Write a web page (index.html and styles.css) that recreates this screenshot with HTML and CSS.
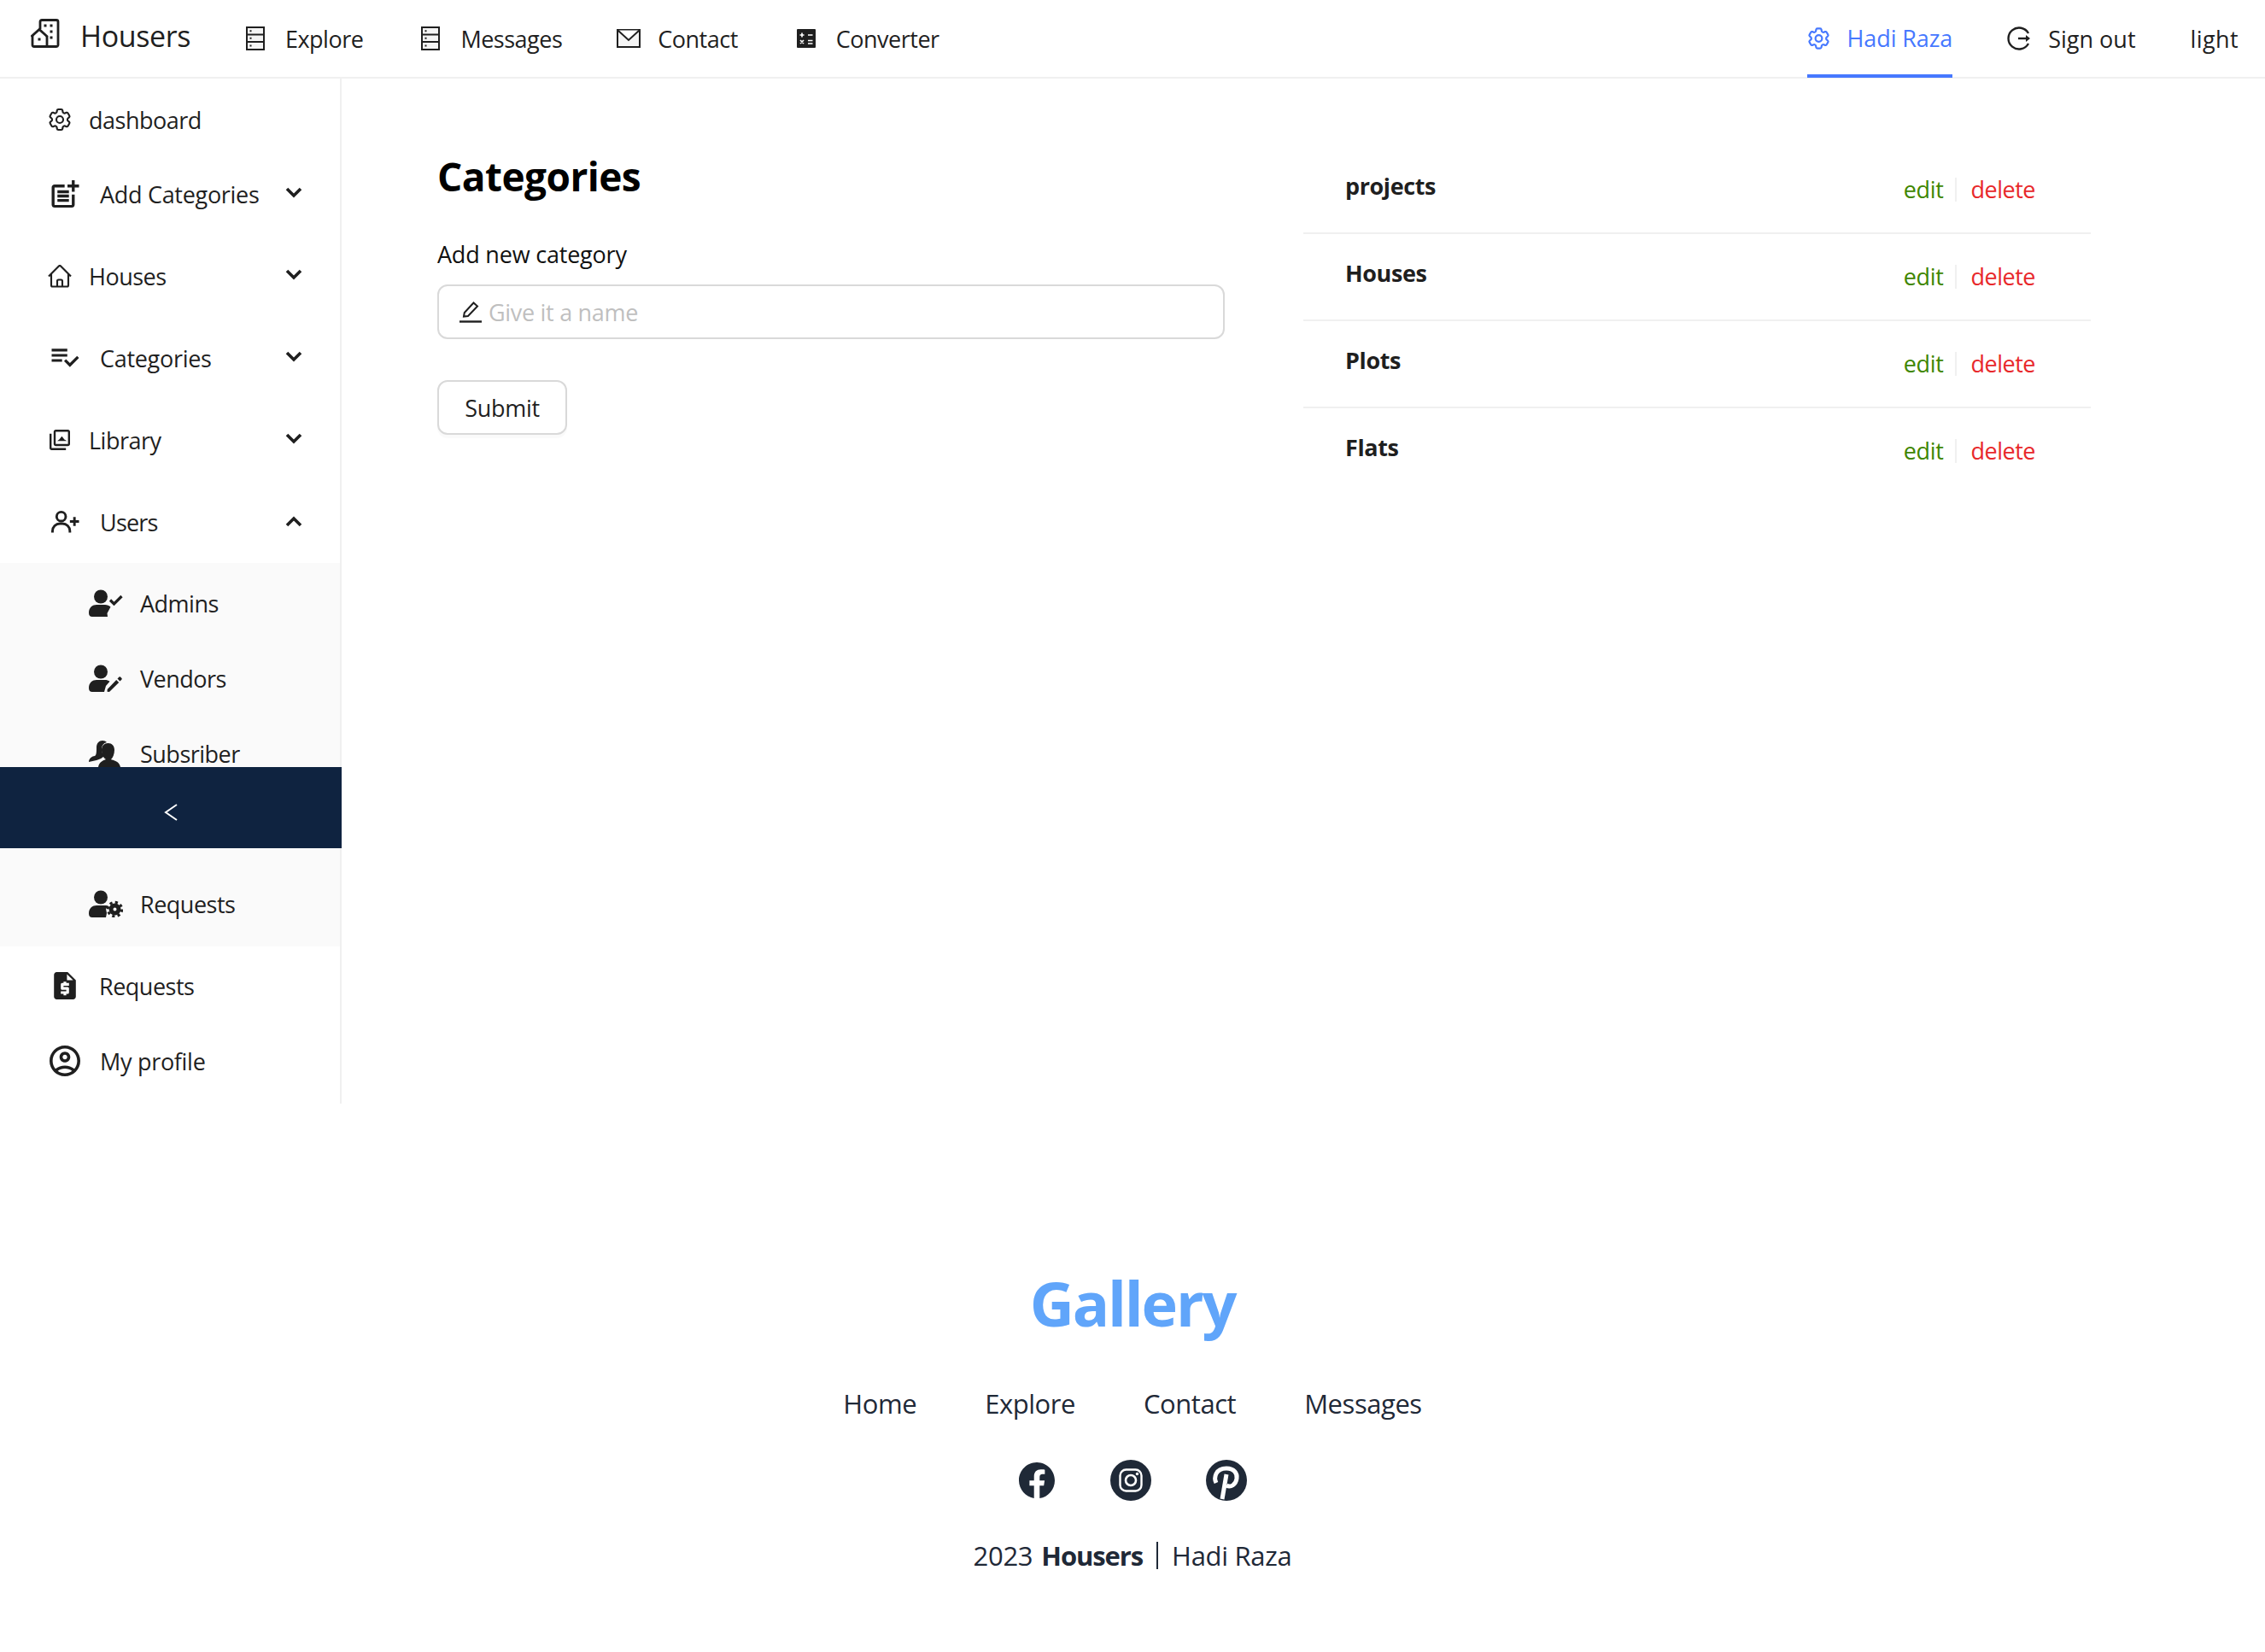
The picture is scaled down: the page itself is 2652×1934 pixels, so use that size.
FILE: index.html
```html
<!DOCTYPE html>
<html lang="en">
<head>
	<meta charset="UTF-8">
	<title>Houser admin - Categories</title>
	<link rel="stylesheet" href="styles.css">
</head>
<body>

	<!-- Top bar -->
	<header class="topbar">
		<a class="brand">
			<svg class="brand-icon" viewBox="0 0 34 34" fill="none" stroke="#1f1f1f" stroke-width="2.800"><path d="M11 12V3.500a2 2 0 0 1 2-2h17a2 2 0 0 1 2 2v27.500a2 2 0 0 1-2 1.500H4a2 2 0 0 1-2-2V20"/><path d="M0.500 21L10 12.500 19.500 21"/><path d="M19 20v13"/><path d="M15.500 8h3M22.500 8h3M22.500 15h3M22.500 22h3M8.500 24h3"/></svg>
			<span>Housers</span>
		</a>
		<nav class="topnav">
			<a class="topnav-item item-explore">
				<svg class="ic-server" viewBox="0 0 22 28" fill="none" stroke="#1f1f1f" stroke-width="2"><rect x="1" y="1" width="20" height="26" fill="#f4f4f4"/><path d="M1 9.500h20M1 18h20"/><path d="M4.500 5.200h2M4.500 13.800h2M4.500 22.500h2"/></svg>
				<span>Explore</span>
			</a>
			<a class="topnav-item">
				<svg class="ic-server" viewBox="0 0 22 28" fill="none" stroke="#1f1f1f" stroke-width="2"><rect x="1" y="1" width="20" height="26" fill="#f4f4f4"/><path d="M1 9.500h20M1 18h20"/><path d="M4.500 5.200h2M4.500 13.800h2M4.500 22.500h2"/></svg>
				<span>Messages</span>
			</a>
			<a class="topnav-item item-contact">
				<svg class="ic-mail" viewBox="0 0 28 22" fill="none" stroke="#1f1f1f" stroke-width="2"><rect x="1" y="1" width="26" height="20" fill="#f4f4f4"/><path d="M1.500 1.500L14 13 26.500 1.500" fill="#fff"/></svg>
				<span>Contact</span>
			</a>
			<a class="topnav-item">
				<svg class="ic-calc" viewBox="0 0 22 22"><rect width="22" height="22" rx="1" fill="#1f1f1f"/><path d="M3.500 7h5M6 4.500v5M13 7h5.500M4 13l4 4M8 13l-4 4M13 13.500h5.500M13 17h5.500" stroke="#fff" stroke-width="1.700" fill="none"/></svg>
				<span>Converter</span>
			</a>
		</nav>
		<div class="topbar-right">
			<a class="topnav-item is-active">
				<svg class="ic-gear" viewBox="1.500 1.500 21 21" fill="none" stroke="currentColor" stroke-width="1.700"><path d="M9.594 3.940c.090-.542.560-.940 1.110-.940h2.593c.550 0 1.020.398 1.110.940l.213 1.281c.063.374.313.686.645.870.074.040.147.083.220.127.324.196.720.257 1.075.124l1.217-.456a1.125 1.125 0 0 1 1.370.490l1.296 2.247a1.125 1.125 0 0 1-.260 1.431l-1.003.827c-.293.240-.438.613-.431.992a6.759 6.759 0 0 1 0 .255c-.007.378.138.750.430.990l1.005.828c.424.350.534.954.260 1.430l-1.298 2.247a1.125 1.125 0 0 1-1.369.491l-1.217-.456c-.355-.133-.750-.072-1.076.124a6.570 6.570 0 0 1-.220.128c-.331.183-.581.495-.644.869l-.213 1.280c-.090.543-.560.941-1.110.941h-2.594c-.550 0-1.020-.398-1.110-.940l-.213-1.281c-.062-.374-.312-.686-.644-.870a6.520 6.520 0 0 1-.220-.127c-.325-.196-.720-.257-1.076-.124l-1.217.456a1.125 1.125 0 0 1-1.369-.490l-1.297-2.247a1.125 1.125 0 0 1 .260-1.431l1.004-.827c.292-.240.437-.613.430-.992a6.932 6.932 0 0 1 0-.255c.007-.378-.138-.750-.430-.990l-1.004-.828a1.125 1.125 0 0 1-.260-1.430l1.297-2.247a1.125 1.125 0 0 1 1.370-.491l1.216.456c.356.133.751.072 1.076-.124.072-.044.146-.087.220-.128.332-.183.582-.495.644-.869l.214-1.281z"/><circle cx="12" cy="12" r="3"/></svg>
				<span>Hadi Raza</span>
			</a>
			<a class="topnav-item item-signout">
				<svg class="ic-signout" viewBox="0 0 28 28" fill="none" stroke="#1f1f1f" stroke-width="2.400"><path d="M25 8a12.500 12.500 0 1 0 0 12"/><path d="M13 14h12" /><path d="M22 10l5 4-5 4z" fill="#1f1f1f" stroke="none"/></svg>
				<span>Sign out</span>
			</a>
			<a class="theme-toggle">light</a>
		</div>
	</header>

	<div class="layout">
		<!-- Sidebar menu -->
		<aside class="sidebar">
			<ul class="menu">
				<li class="menu-row row-first pad-a">
					<svg class="ic-side-gear" viewBox="1.500 1.500 21 21" fill="none" stroke="#1f1f1f" stroke-width="1.600"><path d="M9.594 3.940c.090-.542.560-.940 1.110-.940h2.593c.550 0 1.020.398 1.110.940l.213 1.281c.063.374.313.686.645.870.074.040.147.083.220.127.324.196.720.257 1.075.124l1.217-.456a1.125 1.125 0 0 1 1.370.490l1.296 2.247a1.125 1.125 0 0 1-.260 1.431l-1.003.827c-.293.240-.438.613-.431.992a6.759 6.759 0 0 1 0 .255c-.007.378.138.750.430.990l1.005.828c.424.350.534.954.260 1.430l-1.298 2.247a1.125 1.125 0 0 1-1.369.491l-1.217-.456c-.355-.133-.750-.072-1.076.124a6.570 6.570 0 0 1-.220.128c-.331.183-.581.495-.644.869l-.213 1.280c-.090.543-.560.941-1.110.941h-2.594c-.550 0-1.020-.398-1.110-.940l-.213-1.281c-.062-.374-.312-.686-.644-.870a6.520 6.520 0 0 1-.220-.127c-.325-.196-.720-.257-1.076-.124l-1.217.456a1.125 1.125 0 0 1-1.369-.490l-1.297-2.247a1.125 1.125 0 0 1 .260-1.431l1.004-.827c.292-.240.437-.613.430-.992a6.932 6.932 0 0 1 0-.255c.007-.378-.138-.750-.430-.990l-1.004-.828a1.125 1.125 0 0 1-.260-1.430l1.297-2.247a1.125 1.125 0 0 1 1.370-.491l1.216.456c.356.133.751.072 1.076-.124.072-.044.146-.087.220-.128.332-.183.582-.495.644-.869l.214-1.281z"/><circle cx="12" cy="12" r="3"/></svg>
					<span>dashboard</span>
				</li>
				<li class="menu-row has-caret pad-b">
					<svg class="ic-34" viewBox="3 2 19 19" fill="#1f1f1f"><path d="M17 19.220H5V7h7V5H5c-1.100 0-2 .9-2 2v12c0 1.100.9 2 2 2h12c1.100 0 2-.9 2-2v-7h-2v7.220z"/><path d="M19 2h-2v3h-3v2h3v3h2V7h3V5h-3V2z"/><path d="M7 9h8v2H7zM7 12h8v2H7zM7 15h8v2H7z"/></svg>
					<span>Add Categories</span>
					<svg class="caret" viewBox="0 0 20 14" fill="none" stroke="#1f1f1f" stroke-width="3.600"><path d="M2 3l8 8 8-8"/></svg>
				</li>
				<li class="menu-row has-caret pad-a">
					<svg class="ic-home" viewBox="1.500 2 21 20" fill="none" stroke="#1f1f1f" stroke-width="1.600"><path d="M2.250 12l8.954-8.955c.440-.439 1.152-.439 1.591 0L21.750 12M4.500 9.750v10.125c0 .621.504 1.125 1.125 1.125H9.750v-4.875c0-.621.504-1.125 1.125-1.125h2.250c.621 0 1.125.504 1.125 1.125V21h4.125c.621 0 1.125-.504 1.125-1.125V9.750M8.250 21h8.250"/></svg>
					<span>Houses</span>
					<svg class="caret" viewBox="0 0 20 14" fill="none" stroke="#1f1f1f" stroke-width="3.600"><path d="M2 3l8 8 8-8"/></svg>
				</li>
				<li class="menu-row has-caret pad-b">
					<svg class="ic-34" viewBox="2 2.500 21 21" fill="#1f1f1f"><path d="M14 10H2v2h12v-2zm0-4H2v2h12V6zM2 16h8v-2H2v2zm19.500-4.500L23 13l-6.990 7-4.510-4.500L13 14l3.010 3 5.490-5.500z"/></svg>
					<span>Categories</span>
					<svg class="caret" viewBox="0 0 20 14" fill="none" stroke="#1f1f1f" stroke-width="3.600"><path d="M2 3l8 8 8-8"/></svg>
				</li>
				<li class="menu-row has-caret pad-c">
					<svg class="ic-lib" viewBox="2 2 20 20" fill="#1f1f1f"><path d="M20 4v12H8V4h12m0-2H8c-1.100 0-2 .9-2 2v12c0 1.100.9 2 2 2h12c1.100 0 2-.9 2-2V4c0-1.100-.9-2-2-2zm-8.500 9.670l2.500-3.170 2.500 3 2.500 1.500H9.500zM2 6v14c0 1.100.9 2 2 2h14v-2H4V6H2z"/></svg>
					<span>Library</span>
					<svg class="caret" viewBox="0 0 20 14" fill="none" stroke="#1f1f1f" stroke-width="3.600"><path d="M2 3l8 8 8-8"/></svg>
				</li>
				<li class="menu-row has-caret pad-b item-users">
					<svg class="ic-34" viewBox="0 0 34 28" fill="none" stroke="#1f1f1f" stroke-width="3"><circle cx="12" cy="7.500" r="5.500"/><path d="M1.500 27v-2a9 9 0 0 1 9-9h3a9 9 0 0 1 9 9v2"/><path d="M22.500 13.500h11M28 8v11"/></svg>
					<span>Users</span>
					<svg class="caret caret-up" viewBox="0 0 20 14" fill="none" stroke="#1f1f1f" stroke-width="3.600"><path d="M2 11l8-8 8 8"/></svg>
				</li>
			</ul>

			<ul class="submenu">
				<li class="sub-row">
					<svg class="ic-sub" viewBox="0 0 40 32" fill="#1f1f1f"><circle cx="14" cy="8.500" r="8"/><path d="M0 27.500C0 21 4.500 18 9 18h10c2.500 0 5 1 6.500 2.500l-4 7.500 .5 4H4c-2.500 0-4-1.500-4-4.500z"/><path d="M25 12.500l4.500 4.500 9-9" fill="none" stroke="#1f1f1f" stroke-width="3.200"/></svg>
					<span>Admins</span>
				</li>
				<li class="sub-row">
					<svg class="ic-sub" viewBox="0 0 40 32" fill="#1f1f1f"><circle cx="14" cy="8.500" r="8"/><path d="M0 27.500C0 21 4.500 18 9 18h10c2 0 4 .6 5.500 1.700L20 25l-2 7H4c-2.500 0-4-1.500-4-4.500z"/><path d="M24 32l-2.500-.2 .2-2.800 10.500-11 3 3zM33.500 16.500l2-2c.5-.4 1-.4 1.500 0l1.500 1.500c.4.5.4 1 0 1.500l-2 2z"/></svg>
					<span>Vendors</span>
				</li>
				<li class="sub-row">
					<svg class="ic-sub" viewBox="0 0 40 32" fill="#1f1f1f"><path d="M9 9c0-5 3-8 7-8 2 0 4 .8 5 2-4 1-6 4-6 8 0 3 1 6 3 8-2 2-5 4-9 5l-9 2c0-4 4-7 7-7 2-1 2-5 2-10z"/><path d="M15 12c0-5 3-8 7.500-8S30 7 30 12s-2 9-4 11c2 1 10 2 11 9H11c1-6 6-8 9-9-3-2-5-6-5-11z"/></svg>
					<span>Subsriber</span>
				</li>
				<li class="sub-row sub-last">
					<svg class="ic-sub" viewBox="0 0 40 32" fill="#1f1f1f"><circle cx="14" cy="8.500" r="8"/><path d="M0 27.500C0 21 4.500 18 9 18h10c1.500 0 3 .3 4 1l-3 3 1 5-1 5H4c-2.500 0-4-1.500-4-4.500z"/><circle cx="30.500" cy="22.500" r="8.200" fill="none" stroke="#1f1f1f" stroke-width="3" stroke-dasharray="3.200 3.240"/><circle cx="30.500" cy="22.500" r="4.500" fill="none" stroke="#1f1f1f" stroke-width="5"/></svg>
					<span>Requests</span>
				</li>
			</ul>

			<ul class="menu menu-bottom">
				<li class="menu-row pad-d">
					<svg class="ic-doc" viewBox="4 2 16 20" fill="#1f1f1f"><path d="M14 2H6c-1.100 0-1.990.9-1.990 2L4 20c0 1.100.890 2 1.990 2H18c1.100 0 2-.9 2-2V8l-6-6zm1 10h-4v1h3c.550 0 1 .450 1 1v3c0 .550-.450 1-1 1h-1v1h-2v-1H9v-2h4v-1h-3c-.550 0-1-.450-1-1v-3c0-.550.450-1 1-1h1V9h2v1h2v2zm-1.500-4V3.500L18 8h-4.500z"/></svg>
					<span>Requests</span>
				</li>
				<li class="menu-row pad-e">
					<svg class="ic-profile" viewBox="2 2 20 20" fill="#1f1f1f"><path d="M12 2C6.480 2 2 6.480 2 12s4.480 10 10 10 10-4.480 10-10S17.520 2 12 2zM7.350 18.500C8.660 17.560 10.260 17 12 17s3.340.560 4.650 1.500c-1.310.940-2.910 1.500-4.650 1.500s-3.340-.560-4.650-1.500zm10.790-1.380C16.450 15.800 14.320 15 12 15s-4.450.800-6.140 2.120C4.700 15.730 4 13.950 4 12c0-4.420 3.580-8 8-8s8 3.580 8 8c0 1.950-.7 3.730-1.860 5.120z"/><path d="M12 6c-1.930 0-3.500 1.570-3.500 3.500S10.070 13 12 13s3.500-1.570 3.500-3.500S13.930 6 12 6zm0 5c-.830 0-1.500-.670-1.500-1.500S11.170 8 12 8s1.500.670 1.500 1.500S12.830 11 12 11z"/></svg>
					<span>My profile</span>
				</li>
			</ul>

			<!-- collapse trigger sits over the menu -->
			<div class="trigger">
				<svg class="ic-trigger" viewBox="0 0 16 26" fill="none" stroke="#fff" stroke-width="2"><path d="M15 4L2 13l13 9"/></svg>
			</div>
		</aside>

		<!-- Page content -->
		<main class="content">
			<section class="form-col">
				<h1 class="page-title">Categories</h1>
				<label class="field-label">Add new category</label>
				<div class="input-box">
					<svg class="ic-pen" viewBox="0 0 26 26" fill="none" stroke="#1f1f1f" stroke-width="2"><path d="M5 18.500l.8-4.500L16.500 2.500 21 6.500 10 18z"/><path d="M0 24.500h26" stroke-width="2.400"/></svg>
					<input class="text-input" type="text" placeholder="Give it a name">
				</div>
				<button class="submit-btn">Submit</button>
			</section>

			<section class="list-col">
				<div class="cat-row">
					<span class="cat-name">projects</span>
					<div class="cat-actions"><a class="act-edit">edit</a><a class="act-delete">delete</a></div>
				</div>
				<div class="cat-row">
					<span class="cat-name">Houses</span>
					<div class="cat-actions"><a class="act-edit">edit</a><a class="act-delete">delete</a></div>
				</div>
				<div class="cat-row">
					<span class="cat-name">Plots</span>
					<div class="cat-actions"><a class="act-edit">edit</a><a class="act-delete">delete</a></div>
				</div>
				<div class="cat-row">
					<span class="cat-name">Flats</span>
					<div class="cat-actions"><a class="act-edit">edit</a><a class="act-delete">delete</a></div>
				</div>
			</section>
		</main>
	</div>

	<footer class="footer">
		<div class="footer-title">Gallery</div>
		<nav class="footer-links">
			<a>Home</a>
			<a>Explore</a>
			<a>Contact</a>
			<a>Messages</a>
		</nav>
		<div class="socials">
			<svg class="ic-fb" viewBox="0 0 16 16" fill="#1f2937"><path d="M16 8.049c0-4.446-3.582-8.050-8-8.050C3.580 0-.002 3.603-.002 8.050c0 4.017 2.926 7.347 6.750 7.951v-5.625h-2.030V8.050H6.750V6.275c0-2.017 1.195-3.131 3.022-3.131.876 0 1.791.157 1.791.157v1.980h-1.009c-.993 0-1.303.621-1.303 1.258v1.510h2.218l-.354 2.326H9.250V16c3.824-.604 6.750-3.934 6.750-7.951z"/></svg>
			<svg class="ic-ig" viewBox="0 0 48 48" fill="none"><circle cx="24" cy="24" r="24" fill="#1f2937"/><rect x="11.500" y="11.500" width="25" height="25" rx="7" stroke="#fff" stroke-width="2.400"/><circle cx="24" cy="24" r="6" stroke="#fff" stroke-width="2.600"/><circle cx="31.500" cy="16.500" r="1.700" fill="#fff"/></svg>
			<svg class="ic-pin" viewBox="0 0 48 48" fill="none"><circle cx="24" cy="24" r="24" fill="#1f2937"/><path d="M12 27c-3-6-1-17 12-17 9 0 13 6 12 12-1 7-7 11-12 8" stroke="#fff" stroke-width="5"/><path d="M24 17l-5 29" stroke="#fff" stroke-width="5"/></svg>
		</div>
		<p class="copyright">2023 <b>Housers</b> <span class="sep"></span> Hadi Raza</p>
	</footer>

</body>
</html>
```

FILE: styles.css
```css
:root{
	--ink: #1f1f1f;
	--line: #f0f0f0;
	--blue: #4678ff;
	--footer-ink: #1f2937;
}
*{
	box-sizing: border-box;
}
body {
	margin: 0;
	min-height: 1934px;
	background-color: white;
	color: var(--ink);
	font-family: "Open Sans", "Noto Sans", sans-serif;
	font-size: 27px;
	letter-spacing: -0.3px;
}
ul {
	list-style: none;
	margin: 0;
	padding: 0;
}
svg {
	display: block;
	flex: none;
}

/* top bar */
.topbar {
	display: flex;
	align-items: center;
	height: 92px;
	padding: 0 31px 0 36px;
	border-bottom: 2px solid var(--line);
}
.brand {
	display: flex;
	align-items: center;
	gap: 24px;
	font-size: 34px;
	letter-spacing: -0.4px;
	margin-top: -6px;
}
.brand-icon {
	width: 34px;
	height: 34px;
	margin-top: -6px;
}
.topnav {
	display: flex;
	margin-left: 65px;
	gap: 64px;
	letter-spacing: -0.5px;
}
.topnav-item {
	display: flex;
	align-items: center;
	gap: 24px;
}
.item-explore {
	margin-right: 4px;
}
.item-contact {
	gap: 20px;
	margin-right: 5px;
}
.topbar-right {
	display: flex;
	align-items: center;
	margin-left: auto;
	height: 90px;
}
.topbar-right .topnav-item {
	margin-right: 64px;
	gap: 20px;
}
.topbar-right .topnav-item.is-active {
	height: 92px;
	color: var(--blue);
	border-bottom: 4px solid var(--blue);
	padding-top: 3px;
	letter-spacing: -0.1px;
}
.topbar-right .item-signout {
	letter-spacing: 0;
}
.theme-toggle {
	letter-spacing: 0.4px;
}
.ic-server { width: 22px; height: 28px; }
.ic-mail { width: 28px; height: 22px; }
.ic-calc { width: 22px; height: 22px; }
.ic-gear { width: 27px; height: 28px; }
.ic-signout { width: 28px; height: 28px; }

/* layout */
.layout {
	display: flex;
}

/* sidebar */
.sidebar {
	position: relative;
	width: 400px;
	height: 1200px;
	border-right: 2px solid var(--line);
}
.menu-row {
	display: flex;
	align-items: center;
	height: 80px;
	margin-bottom: 16px;
	padding-right: 44px;
}
.row-first {
	margin-top: 8px;
	margin-bottom: 7px;
}
.menu .menu-row:last-child {
	margin-bottom: 8px;
}
.menu-bottom .menu-row {
	margin-bottom: 8px;
}
.menu-bottom {
	padding-top: 6px;
}
.pad-a { padding-left: 56px; gap: 20px; letter-spacing: -0.5px; }
.pad-b { padding-left: 60px; gap: 24px; }
.pad-c { padding-left: 58px; gap: 22px; letter-spacing: -0.5px; }
.pad-d { padding-left: 63px; gap: 27px; letter-spacing: -0.5px; }
.pad-e { padding-left: 58px; gap: 23px; }
.item-users { letter-spacing: -0.8px; }
.caret {
	width: 20px;
	height: 14px;
	margin-left: auto;
	margin-top: -4px;
}
.caret-up {
	margin-top: 0;
}
.ic-side-gear { width: 28px; height: 28px; }
.ic-34 { width: 33px; height: 32px; }
.ic-home { width: 28px; height: 27px; }
.ic-lib { width: 24px; height: 24px; }
.ic-doc { width: 26px; height: 32px; }
.ic-profile { width: 36px; height: 36px; }
.submenu {
	height: 449px;
	padding-top: 7px;
	background-color: #fafafa;
}
.sub-row {
	display: flex;
	align-items: center;
	gap: 20px;
	height: 80px;
	margin-bottom: 8px;
	padding-left: 104px;
	letter-spacing: -0.5px;
}
.sub-last {
	margin-top: 96px;
}
.ic-sub { width: 40px; height: 32px; }
.trigger {
	position: absolute;
	top: 806px;
	left: 0;
	width: 400px;
	height: 95px;
	display: flex;
	justify-content: center;
	align-items: center;
	background-color: #0f2340;
}
.ic-trigger {
	width: 16px;
	height: 26px;
	margin-top: 10px;
}

/* content */
.content {
	flex: 1;
	display: grid;
	grid-template-columns: 922px 922px;
	column-gap: 92px;
	align-items: start;
	padding: 0 0 0 112px;
}
.page-title {
	margin: 82px 0 0;
	font-size: 46px;
	line-height: 64px;
	font-weight: 700;
	color: black;
	letter-spacing: -0.55px;
}
.field-label {
	display: block;
	margin-top: 41px;
	color: #111;
	letter-spacing: -0.2px;
}
.input-box {
	display: flex;
	align-items: center;
	gap: 8px;
	height: 64px;
	margin-top: 17px;
	padding: 0 24px;
	border: 2px solid #d9d9d9;
	border-radius: 12px;
}
.ic-pen { width: 26px; height: 26px; }
.text-input {
	flex: 1;
	border: none;
	outline: none;
	padding: 0;
	font: inherit;
	letter-spacing: inherit;
	color: var(--ink);
}
.text-input::placeholder {
	color: #bfbfbf;
}
.submit-btn {
	display: block;
	width: 152px;
	height: 64px;
	margin-top: 48px;
	padding: 0;
	background: white;
	border: 2px solid #d9d9d9;
	border-radius: 12px;
	box-shadow: 0 4px 0 rgba(0, 0, 0, 0.02);
	font: inherit;
	letter-spacing: inherit;
	color: var(--ink);
}
.list-col {
	padding-top: 80px;
}
.cat-row {
	display: flex;
	justify-content: space-between;
	align-items: flex-start;
	height: 102px;
	padding: 28px 65px 0 49px;
	border-bottom: 2px solid var(--line);
}
.cat-row:last-child {
	border-bottom: none;
}
.cat-name {
	font-weight: 700;
	line-height: 36px;
	letter-spacing: -0.4px;
}
.cat-actions {
	display: flex;
	align-items: center;
	margin-top: 8px;
}
.act-edit {
	color: #3f8600;
	padding-right: 13px;
	border-right: 2px solid var(--line);
	line-height: 28px;
}
.act-delete {
	color: #e8282b;
	padding-left: 17px;
	line-height: 28px;
	letter-spacing: -0.5px;
}

/* footer */
.footer {
	display: flex;
	flex-direction: column;
	align-items: center;
	padding-top: 183px;
	color: var(--footer-ink);
}
.footer-title {
	font-size: 72px;
	line-height: 100px;
	font-weight: 700;
	color: #60a5fa;
	letter-spacing: -2.2px;
}
.footer-links {
	display: flex;
	gap: 80px;
	margin-top: 46px;
	font-size: 31px;
	line-height: 44px;
	letter-spacing: -0.45px;
}
.socials {
	display: flex;
	align-items: center;
	gap: 64px;
	margin-top: 44px;
}
.ic-fb {
	width: 42px;
	height: 42px;
	margin-right: 1px;
	margin-left: 1px;
}
.ic-ig { width: 48px; height: 48px; }
.ic-pin { width: 48px; height: 48px; }
.copyright {
	display: flex;
	align-items: center;
	gap: 10px;
	margin: 42px 0 0;
	font-size: 31px;
	line-height: 44px;
}
.copyright b {
	letter-spacing: -1.1px;
}
.sep {
	display: inline-block;
	width: 2px;
	height: 32px;
	margin: 0 6px;
	background-color: var(--footer-ink);
}
```
